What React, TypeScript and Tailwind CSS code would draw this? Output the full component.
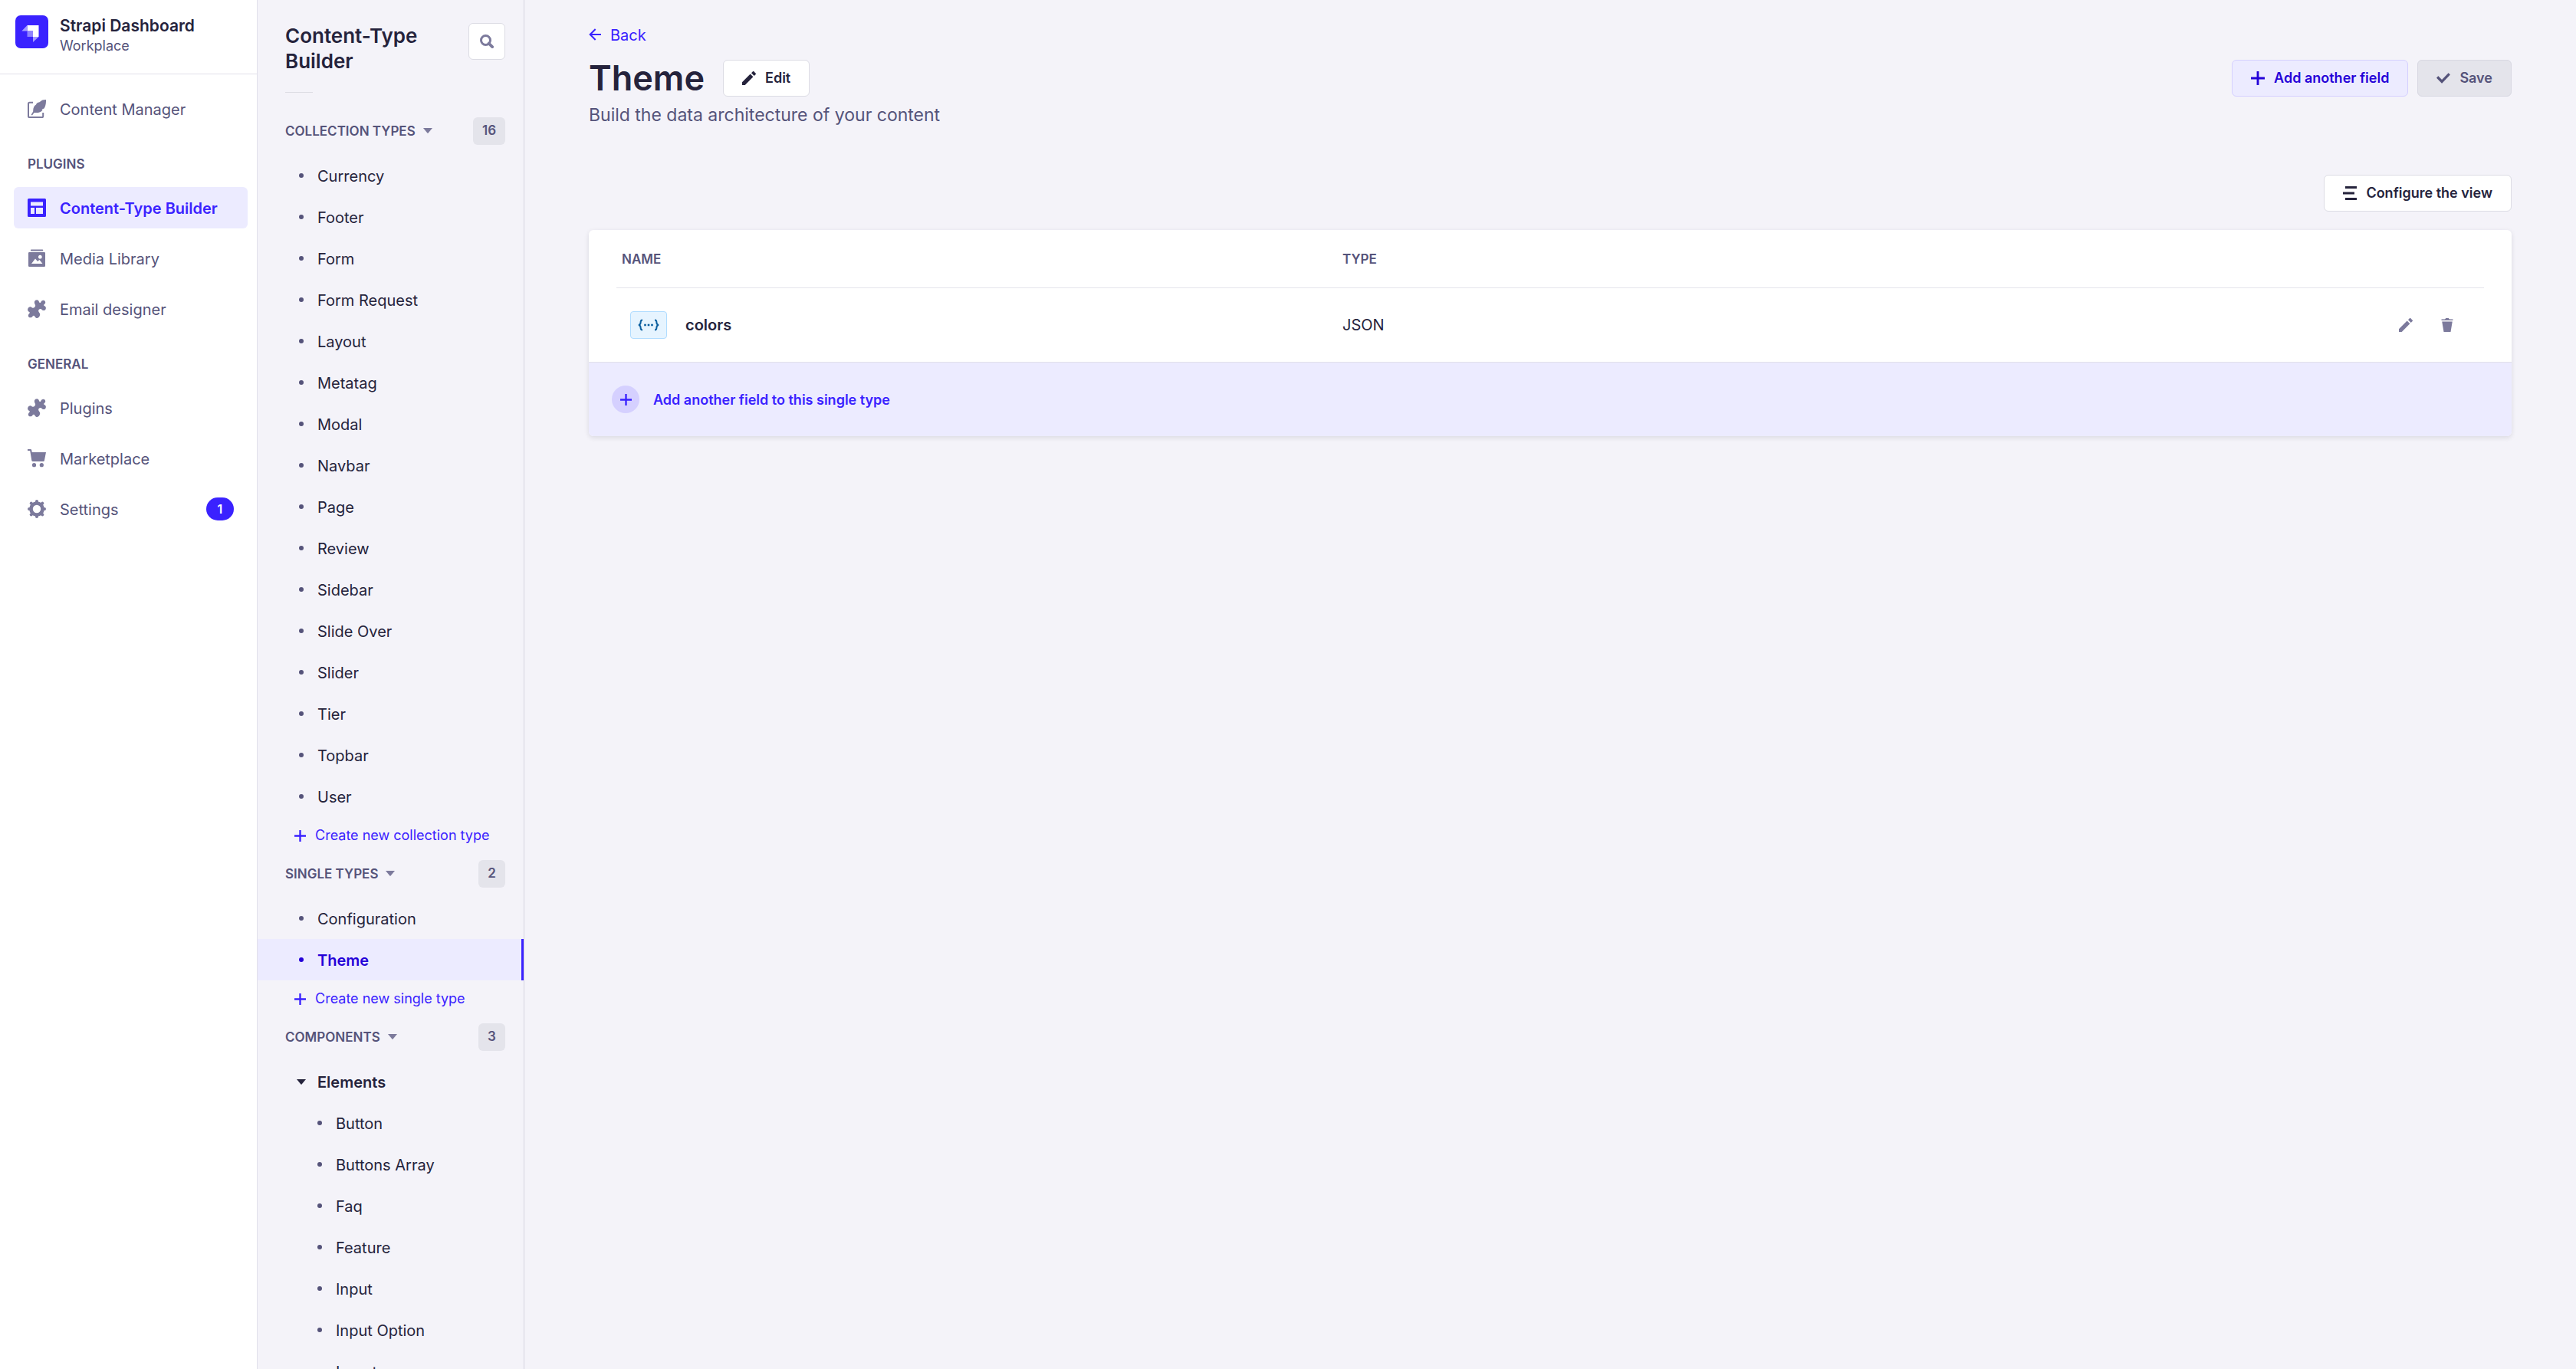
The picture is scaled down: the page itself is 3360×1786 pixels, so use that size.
import React from "react";

type IconProps = { className?: string };

const PlusIcon = ({ className }: IconProps) => (
  <svg viewBox="0 0 24 24" fill="currentColor" className={className} aria-hidden="true">
    <path d="M24 13.604a.3.3 0 01-.3.3h-9.795V23.7a.3.3 0 01-.3.3h-3.21a.3.3 0 01-.3-.3v-9.795H.3a.3.3 0 01-.3-.3v-3.21a.3.3 0 01.3-.3h9.795V.3a.3.3 0 01.3-.3h3.21a.3.3 0 01.3.3v9.795H23.7a.3.3 0 01.3.3v3.21z" />
  </svg>
);

const PencilIcon = ({ className }: IconProps) => (
  <svg viewBox="0 0 24 24" fill="currentColor" className={className} aria-hidden="true">
    <path d="M23.604 3.514c.528.528.528 1.36 0 1.887l-2.622 2.607-4.99-4.99L18.6.396a1.322 1.322 0 0 1 1.887 0l3.118 3.118zM0 24v-4.99l14.2-14.2 4.99 4.99L4.99 24H0z" />
  </svg>
);

const TrashIcon = ({ className }: IconProps) => (
  <svg viewBox="0 0 24 24" fill="currentColor" className={className} aria-hidden="true">
    <path d="M3.236 6.149a.2.2 0 00-.197.233L6 24h12l2.96-17.618a.2.2 0 00-.196-.233H3.236zM21.8 1.983c.11 0 .2.09.2.2v1.584a.2.2 0 01-.2.2H2.2a.2.2 0 01-.2-.2V2.183c0-.11.09-.2.2-.2h5.511c.9 0 1.631-1.09 1.631-1.983h5.316c0 .894.73 1.983 1.631 1.983H21.8z" />
  </svg>
);

const CheckIcon = ({ className }: IconProps) => (
  <svg viewBox="0 0 24 24" fill="currentColor" className={className} aria-hidden="true">
    <path d="M20.727 2.97a.2.2 0 01.286 0l2.85 2.89a.2.2 0 010 .28L9.554 20.854a.2.2 0 01-.285 0l-9.13-9.243a.2.2 0 010-.281l2.85-2.892a.2.2 0 01.284 0l6.14 6.209L20.726 2.97z" />
  </svg>
);

const LayerIcon = ({ className }: IconProps) => (
  <svg viewBox="0 0 24 24" fill="currentColor" className={className} aria-hidden="true">
    <path d="M4 0h20v4H4zM0 10h20v4H0zM4 20h20v4H4z" />
  </svg>
);

const ArrowLeftIcon = ({ className }: IconProps) => (
  <svg viewBox="0 0 24 24" fill="none" stroke="currentColor" strokeWidth="3" className={className} aria-hidden="true">
    <path d="M24 12H3M13 1.500L2.500 12L13 22.500" />
  </svg>
);

const CaretIcon = ({ className }: IconProps) => (
  <svg viewBox="0 0 12 7" fill="currentColor" className={className} aria-hidden="true">
    <path d="M0 0h12L6.600 6.400a.8.8 0 0 1-1.200 0z" />
  </svg>
);

const SearchIcon = ({ className }: IconProps) => (
  <svg viewBox="0 0 24 24" fill="none" stroke="currentColor" className={className} aria-hidden="true">
    <circle cx="10" cy="10" r="8" strokeWidth="4" />
    <path d="M15.500 15.500L21.500 21.500" strokeWidth="5" strokeLinecap="round" />
  </svg>
);

const ContentIcon = ({ className }: IconProps) => (
  <svg viewBox="0 0 24 24" className={className} aria-hidden="true">
    <path d="M7 3.800H2.600A1.600 1.600 0 0 0 1 5.400V21.400A1.600 1.600 0 0 0 2.600 23H18.600A1.600 1.600 0 0 0 20.200 21.400V17" fill="none" stroke="currentColor" strokeWidth="2" />
    <path d="M24 0C20.500 0 18 .8 16.500 2.600L15.500 3.200C12.500 3.500 11.500 5 11 6.500C8.500 8 7 10.500 7.200 15.500L4.600 19.800L6 20.600L8.500 17C14 17.500 17.500 16.500 19.500 13.500L18.500 12.800L21.500 11.500C23.500 8.500 24.200 4 24 0z" fill="currentColor" />
  </svg>
);

const BuilderIcon = ({ className }: IconProps) => (
  <svg viewBox="0 0 24 24" fill="currentColor" className={className} aria-hidden="true">
    <path fillRule="evenodd" d="M1.500 0h21A1.500 1.500 0 0 1 24 1.500v21a1.500 1.500 0 0 1-1.500 1.500h-21A1.500 1.500 0 0 1 0 22.500v-21A1.500 1.500 0 0 1 1.500 0zM4 4.500v5h16v-5zM4 12v8h5v-8zM11 12v8h9v-8z" />
  </svg>
);

const MediaIcon = ({ className }: IconProps) => (
  <svg viewBox="0 0 24 24" fill="currentColor" className={className} aria-hidden="true">
    <path d="M4 1.200A.8.8 0 0 1 4.700.4H19.300a.8.8 0 0 1 0 2H4.700A.8.8 0 0 1 4 1.200z" />
    <path fillRule="evenodd" d="M2.200 4h19.600A1.200 1.200 0 0 1 23 5.200v16.600a1.200 1.200 0 0 1-1.200 1.200H2.200A1.200 1.200 0 0 1 1 21.800V5.200A1.200 1.200 0 0 1 2.200 4zM5 19h14.500l-4-5-2.500 2-3-3.500zM16.300 7.800a2.400 2.400 0 1 0 .1 0z" />
  </svg>
);

const PuzzleIcon = ({ className }: IconProps) => (
  <svg viewBox="0 0 24 24" fill="currentColor" className={className} aria-hidden="true">
    <path d="M9 2.500C9.800.2 12.600-.6 14.200 1.200C15.200 2.500 14.800 3.800 16.200 3.900C17.600 4 17.200 2.300 18.400 1.400C21.600-.8 24.600 2.600 22.500 5.300C21.700 6.300 20.800 6.700 21.300 7.500C21.700 8.200 22.900 8.200 23.600 9.600C24.600 12 22.800 14.300 20.600 14.100C18.600 13.900 18.600 12 16.800 12C14.800 12 13.600 13.800 14.400 15.600C15 17 16.300 17.800 16.200 19.600C16 22 14.200 24.200 11.800 24C9.500 23.700 9.600 20.800 8 20.800C6.600 20.800 6.700 22 5.600 22.700C2.600 24.600-.5 21.700 1.400 18.900C2.200 17.900 3.100 17.500 2.700 16.600C2.300 15.800 1.300 15.900.5 14.600C-.7 12 1 9.700 3.200 9.200C5 8.900 5.400 10.600 6.800 10.700C8.800 10.800 10.600 8.900 10 7C9.700 5.700 8.500 4.500 9 2.500z" />
  </svg>
);

const CartIcon = ({ className }: IconProps) => (
  <svg viewBox="0 0 24 24" fill="currentColor" className={className} aria-hidden="true">
    <path d="M0 0h3.600A1.600 1.600 0 0 1 5.200 1.300L5.700 4H24L21.900 14.800A1.400 1.400 0 0 1 20.500 16H6.900A1.600 1.600 0 0 1 5.300 14.700L3.200 2H0z" />
    <circle cx="8.500" cy="20.700" r="2.600" />
    <circle cx="18.300" cy="20.700" r="2.600" />
  </svg>
);

const CogIcon = ({ className }: IconProps) => (
  <svg viewBox="0 0 24 24" className={className} aria-hidden="true">
    <circle cx="12" cy="12" r="7.500" fill="none" stroke="currentColor" strokeWidth="4.600" />
    <path d="M12 2v2M12 20v2M2 12h2M20 12h2M4.700 4.700l2 2M17.300 17.300l2 2M4.700 19.300l2-2M17.300 6.700l2-2" stroke="currentColor" strokeWidth="4" strokeLinecap="round" />
  </svg>
);

const JsonIcon = ({ className }: IconProps) => (
  <svg viewBox="0 0 28 16" fill="none" stroke="currentColor" strokeWidth="2" className={className} aria-hidden="true">
    <path d="M6 1.500C3.600 1.500 3.600 2.800 3.600 4.500C3.600 6.500 3.400 7.400 1 8C3.400 8.600 3.600 9.500 3.600 11.500C3.600 13.200 3.600 14.500 6 14.500" />
    <path d="M22 1.500C24.400 1.500 24.400 2.800 24.400 4.500C24.400 6.500 24.600 7.400 27 8C24.600 8.600 24.400 9.500 24.400 11.500C24.400 13.200 24.400 14.500 22 14.500" />
    <path d="M8.200 8h2.600M12.700 8h2.600M17.200 8h2.600" strokeWidth="2.600" />
  </svg>
);

const Logo = ({ className }: IconProps) => (
  <svg viewBox="0 0 43 43" className={className} role="img" aria-label="Strapi">
    <rect width="43" height="43" rx="7" fill="#3a22ff" />
    <path d="M15.500 13H30.500v15H23v-7.500h-7.500z" fill="#fff" />
    <path d="M15.500 20.500H23V28h-7.500z" fill="#8f83ff" />
    <path d="M8.300 20.500L15.500 13v7.500zM23 35V28h7.500z" fill="#a49bff" />
  </svg>
);

type NavItem = {
  label: string;
  Icon: (p: IconProps) => React.ReactElement;
  active?: boolean;
  badge?: number;
};

function NavLink({ label, Icon, active, badge }: NavItem) {
  return (
    <li>
      <a
        href="#"
        aria-current={active ? "page" : undefined}
        className={
          active
            ? "flex h-[54px] items-center gap-[18px] rounded-md bg-[#ecebff] px-[18px] font-semibold text-[#3a22ff]"
            : "flex h-[54px] items-center gap-[18px] rounded-md px-[18px] text-[#55537a]"
        }
      >
        <Icon className={active ? "size-6 shrink-0" : "size-6 shrink-0 text-[#7c7a9c]"} />
        <span className="pt-px whitespace-nowrap">{label}</span>
        {badge !== undefined && (
          <span className="ml-auto flex h-[30px] w-9 items-center justify-center rounded-full bg-[#3a22ff] text-base font-semibold text-white">
            {badge}
          </span>
        )}
      </a>
    </li>
  );
}

function NavHeading({ children }: { children: string }) {
  return <h2 className="px-[18px] text-[17px] leading-6 font-semibold text-[#55537a]">{children}</h2>;
}

function SectionHeader({ label, count }: { label: string; count: number }) {
  return (
    <div className="flex h-9 items-center justify-between pr-6 pl-9">
      <button type="button" className="flex items-center gap-2.5 text-[17px] font-semibold whitespace-nowrap text-[#55537a]">
        <span className="pt-px">{label}</span>
        <CaretIcon className="h-[7px] w-3 text-[#7c7a9c]" />
      </button>
      <span className="flex h-9 min-w-[35px] items-center justify-center rounded-md bg-[#e4e4eb] px-3 text-[17px] font-semibold text-[#55537a]">
        {count}
      </span>
    </div>
  );
}

function TypeLink({ label, active, nested }: { label: string; active?: boolean; nested?: boolean }) {
  return (
    <li>
      <a
        href="#"
        aria-current={active ? "page" : undefined}
        className={
          active
            ? "flex h-[54px] items-center gap-[18px] border-r-3 border-[#3a22ff] bg-[#ecebff] pl-[54px] font-semibold text-[#2400d8]"
            : nested
              ? "flex h-[54px] items-center gap-[18px] pl-[78px]"
              : "flex h-[54px] items-center gap-[18px] pl-[54px]"
        }
      >
        <span className={active ? "size-[6px] rounded-full bg-[#2400d8]" : "size-[6px] rounded-full bg-[#55537a]"} />
        <span className="pt-px">{label}</span>
      </a>
    </li>
  );
}

function CreateButton({ children }: { children: string }) {
  return (
    <button type="button" className="mb-2 flex h-12 items-center gap-3 pl-12 text-lg whitespace-nowrap text-[#3a22ff]">
      <PlusIcon className="size-[15px]" />
      {children}
    </button>
  );
}

const collectionTypes = [
  "Currency", "Footer", "Form", "Form Request", "Layout", "Metatag", "Modal", "Navbar",
  "Page", "Review", "Sidebar", "Slide Over", "Slider", "Tier", "Topbar", "User",
];
const elements = ["Button", "Buttons Array", "Faq", "Feature", "Input", "Input Option", "Logotype"];

const buttonBase = "flex h-12 items-center gap-3 rounded-md border px-6 text-lg font-semibold whitespace-nowrap";

export default function App() {
  return (
    <div className="flex h-screen overflow-hidden bg-[#f4f3f9] font-['Inter',sans-serif] text-xl text-[#25233c]">
      <nav aria-label="Main" className="w-84 shrink-0 border-r border-[#e1e0ea] bg-white">
        <div className="flex h-[97px] items-start gap-[15px] border-b border-[#e1e0ea] px-5 pt-5">
          <Logo className="size-[43px] shrink-0" />
          <div className="whitespace-nowrap">
            <div className="text-[21px] leading-7 font-semibold">Strapi Dashboard</div>
            <div className="text-lg leading-6 text-[#55537a]">Workplace</div>
          </div>
        </div>
        <div className="px-[18px] pt-[18px] pr-3">
          <ul>
            <NavLink label="Content Manager" Icon={ContentIcon} />
          </ul>
          <div className="mt-[33px]">
            <NavHeading>PLUGINS</NavHeading>
            <ul className="mt-[18px] flex flex-col gap-3">
              <NavLink label="Content-Type Builder" Icon={BuilderIcon} active />
              <NavLink label="Media Library" Icon={MediaIcon} />
              <NavLink label="Email designer" Icon={PuzzleIcon} />
            </ul>
          </div>
          <div className="mt-[33px]">
            <NavHeading>GENERAL</NavHeading>
            <ul className="mt-[18px] flex flex-col gap-3">
              <NavLink label="Plugins" Icon={PuzzleIcon} />
              <NavLink label="Marketplace" Icon={CartIcon} />
              <NavLink label="Settings" Icon={CogIcon} badge={1} />
            </ul>
          </div>
        </div>
      </nav>

      <nav aria-label="Content-Type Builder" className="w-[348px] shrink-0 border-r border-[#d5d4e0]">
        <div className="flex items-start justify-between pt-[30px] pr-6 pl-9">
          <h2 className="text-[26px] leading-[33px] font-semibold">
            Content-Type
            <br />
            Builder
          </h2>
          <button
            type="button"
            aria-label="Search"
            className="flex size-12 items-center justify-center rounded-md border border-[#dcdce4] bg-white text-[#7c7a9c]"
          >
            <SearchIcon className="size-[18px]" />
          </button>
        </div>
        <hr className="mt-6 mb-8 ml-9 w-9 border-[#dcdce4]" />
        <SectionHeader label="COLLECTION TYPES" count={16} />
        <ul className="mt-[13px]">
          {collectionTypes.map((t) => (
            <TypeLink key={t} label={t} />
          ))}
        </ul>
        <CreateButton>Create new collection type</CreateButton>
        <SectionHeader label="SINGLE TYPES" count={2} />
        <ul className="mt-[13px]">
          <TypeLink label="Configuration" />
          <TypeLink label="Theme" active />
        </ul>
        <CreateButton>Create new single type</CreateButton>
        <SectionHeader label="COMPONENTS" count={3} />
        <button type="button" className="mt-[13px] flex h-[54px] items-center gap-[15px] pl-[51px] font-semibold">
          <CaretIcon className="h-[7px] w-3" />
          <span className="pt-px">Elements</span>
        </button>
        <ul>
          {elements.map((t) => (
            <TypeLink key={t} label={t} nested />
          ))}
        </ul>
      </nav>

      <main className="min-w-0 flex-1 px-[84px] pt-[30px]">
        <a href="#" className="flex h-[30px] w-fit items-center gap-3 text-[#3a22ff]">
          <ArrowLeftIcon className="size-4" />
          <span className="pt-px">Back</span>
        </a>
        <div className="mt-[18px] flex items-center justify-between">
          <div className="flex items-center gap-6">
            <h1 className="text-[45px] leading-12 font-semibold">Theme</h1>
            <button type="button" className={`${buttonBase} border-[#dcdce4] bg-white`}>
              <PencilIcon className="size-[18px]" />
              Edit
            </button>
          </div>
          <div className="flex gap-3">
            <button type="button" className={`${buttonBase} border-[#d5d0ff] bg-[#ecebff] text-[#2400d8]`}>
              <PlusIcon className="size-[18px]" />
              Add another field
            </button>
            <button type="button" disabled className={`${buttonBase} border-[#d8d8e2] bg-[#e4e4eb] text-[#55537a]`}>
              <CheckIcon className="size-[18px]" />
              Save
            </button>
          </div>
        </div>
        <p className="mt-2 text-[23px] leading-8 text-[#55537a]">Build the data architecture of your content</p>
        <div className="mt-[62px] flex justify-end">
          <button type="button" className={`${buttonBase} border-[#dcdce4] bg-white`}>
            <LayerIcon className="size-[18px]" />
            Configure the view
          </button>
        </div>

        <section className="mt-6 overflow-hidden rounded-md bg-white shadow-[0_2px_6px_rgba(33,33,52,0.12)]">
          <div className="px-9">
            <table className="w-full table-fixed text-left">
              <thead>
                <tr className="h-[75px] border-b border-[#e4e4eb] text-[17px] text-[#55537a]">
                  <th className="w-[940px] pt-1 pl-[7px] font-semibold">NAME</th>
                  <th className="pt-1 pl-[7px] font-semibold">TYPE</th>
                  <th className="w-[140px]" aria-label="Actions" />
                </tr>
              </thead>
              <tbody>
                <tr className="h-[97px]">
                  <td className="pl-[18px]">
                    <div className="flex items-center gap-6 font-semibold">
                      <span className="flex h-9 w-12 items-center justify-center rounded border border-[#b0dcff] bg-[#e6f4ff] text-[#0b5f9f]">
                        <JsonIcon className="h-4 w-7" />
                      </span>
                      <span className="pt-px">colors</span>
                    </div>
                  </td>
                  <td className="pl-[7px]">JSON</td>
                  <td className="pr-[39px]">
                    <div className="flex justify-end gap-9 text-[#7c7a9c]">
                      <button type="button" aria-label="Edit colors">
                        <PencilIcon className="size-[18px]" />
                      </button>
                      <button type="button" aria-label="Delete colors">
                        <TrashIcon className="size-[18px]" />
                      </button>
                    </div>
                  </td>
                </tr>
              </tbody>
            </table>
          </div>
          <button
            type="button"
            className="flex h-[97px] w-full items-center gap-[18px] border-t border-[#e1e0ea] bg-[#ecebff] px-[30px] text-lg font-semibold text-[#3a22ff]"
          >
            <span className="flex size-9 items-center justify-center rounded-full bg-[#d5d0ff]">
              <PlusIcon className="size-[15px]" />
            </span>
            <span className="pt-px">Add another field to this single type</span>
          </button>
        </section>
      </main>
    </div>
  );
}
